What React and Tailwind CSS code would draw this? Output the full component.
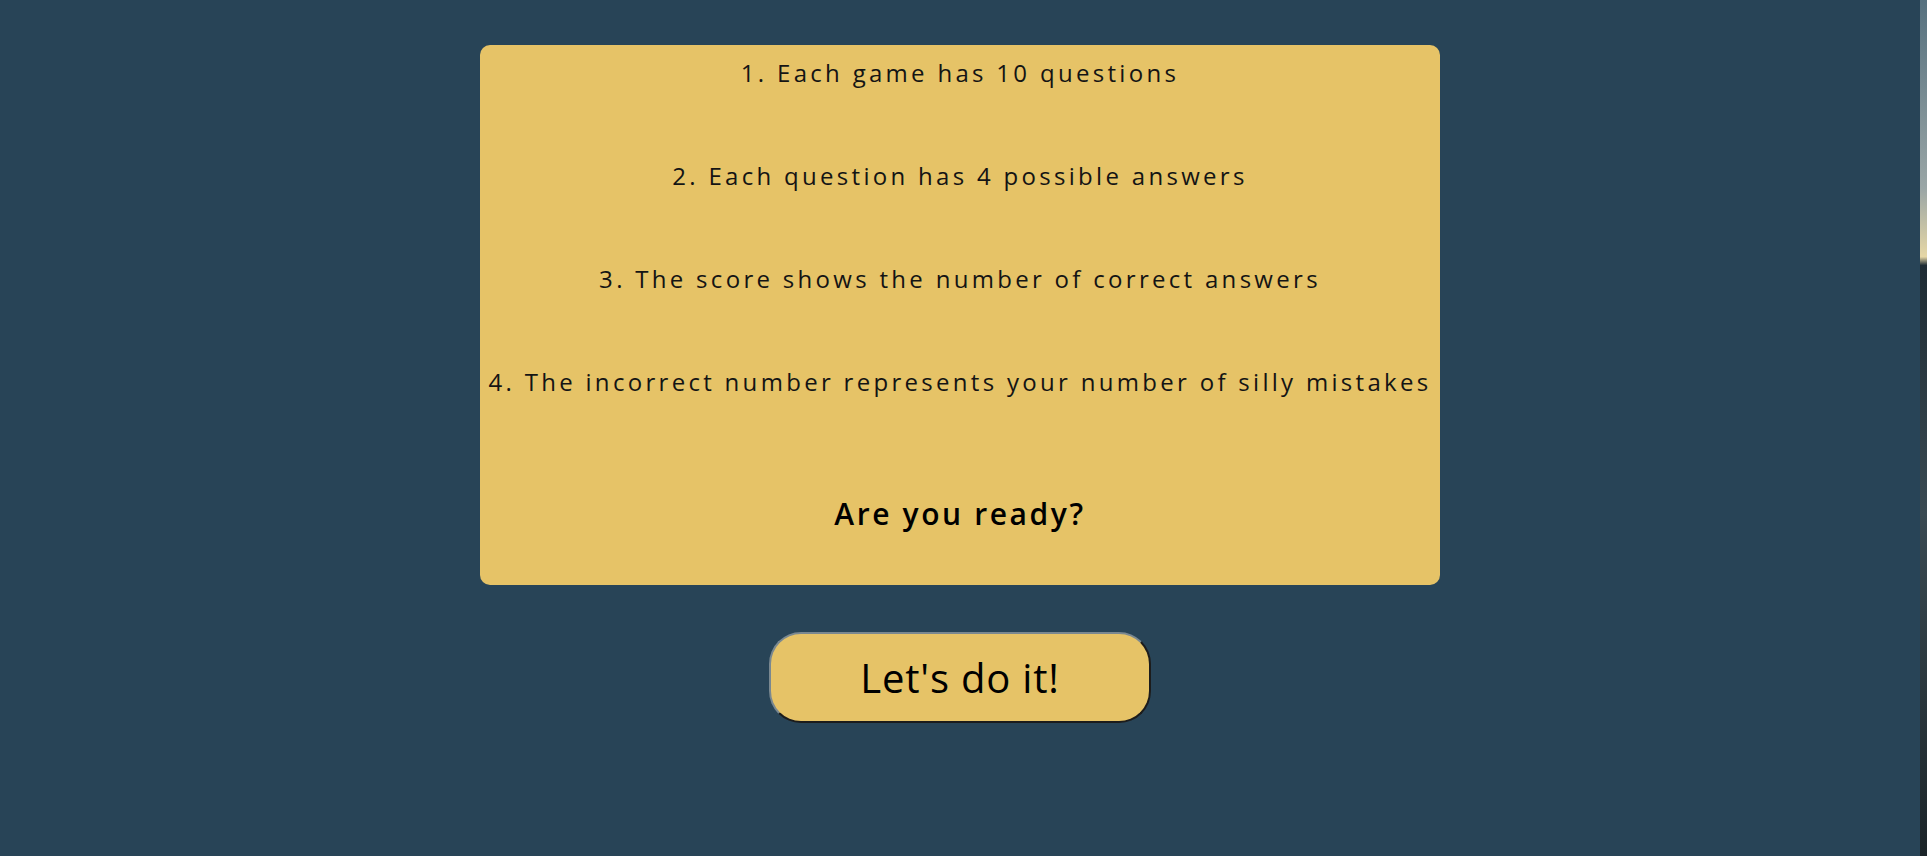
import React from 'react';

const rules = [
  '1. Each game has 10 questions',
  '2. Each question has 4 possible answers',
  '3. The score shows the number of correct answers',
  '4. The incorrect number represents your number of silly mistakes',
];

const App = () => {
  return (
    <div className="flex min-h-[856px] w-full bg-[#284457] font-['Open_Sans',sans-serif]">
      <main className="flex flex-1 flex-col items-center pt-[45px]">
        {/* Rules card */}
        <div className="w-[960px] h-[540px] rounded-[10px] bg-[#e6c367] pt-[8px] text-center text-[#141414]">
          {rules.map((rule) => (
            <p key={rule} className="mb-[64px] text-[24px] leading-[39px] tracking-[3.3px]">
              {rule}
            </p>
          ))}
          <p className="mt-[93px] text-[30px] leading-[40px] font-semibold tracking-[2.6px] text-black">
            Are you ready?
          </p>
        </div>

        <button className="mt-[47px] w-[382px] h-[91px] rounded-[32px] border-2 border-t-[#7a8890] border-l-[#7a8890] border-b-[#1c1c1c] border-r-[#1c1c1c] bg-[#e6c367] text-[40px] tracking-[0.02em] text-black">
          Let's do it!
        </button>
      </main>

      {/* strip of background image peeking at the right edge */}
      <div className="w-[7px] shrink-0 bg-[linear-gradient(to_bottom,#55707e_0%,#9aa6a6_22%,#e6d7a6_30%,#1e2b33_31%,#3a4a52_60%,#1b2428_100%)]" />
    </div>
  );
};

export default App;
